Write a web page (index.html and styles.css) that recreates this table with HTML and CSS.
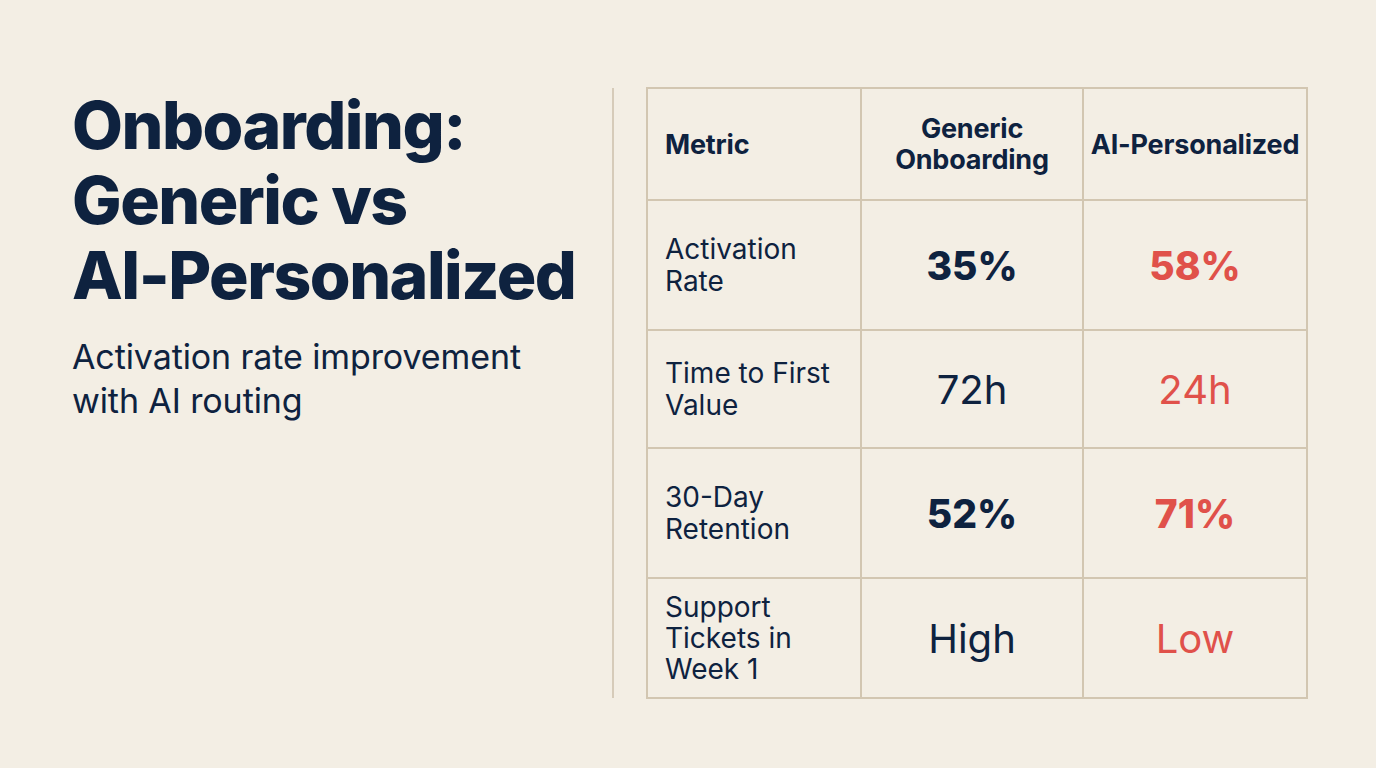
FILE: index.html
```html
<!DOCTYPE html>
<html lang="en">
<head>
<meta charset="utf-8">
<title>Onboarding: Generic vs AI-Personalized</title>
<link rel="stylesheet" href="styles.css">
</head>
<body>
<main class="slide">
  <section class="intro">
    <h1 class="title">Onboarding:<br>Generic vs<br>AI-Personalized</h1>
    <p class="subtitle">Activation rate improvement<br>with AI routing</p>
  </section>
  <div class="divider"></div>
  <table class="compare">
    <colgroup>
      <col class="c1"><col class="c2"><col class="c3">
    </colgroup>
    <thead>
      <tr class="r-head">
        <th class="metric-head">Metric</th>
        <th>Generic<br>Onboarding</th>
        <th>AI-Personalized</th>
      </tr>
    </thead>
    <tbody>
      <tr class="r1">
        <td class="metric">Activation<br>Rate</td>
        <td class="val strong">35%</td>
        <td class="val strong ai">58%</td>
      </tr>
      <tr class="r2">
        <td class="metric">Time to First<br>Value</td>
        <td class="val">72h</td>
        <td class="val ai">24h</td>
      </tr>
      <tr class="r3">
        <td class="metric">30-Day<br>Retention</td>
        <td class="val strong">52%</td>
        <td class="val strong ai">71%</td>
      </tr>
      <tr class="r4">
        <td class="metric tight">Support<br>Tickets in<br>Week 1</td>
        <td class="val">High</td>
        <td class="val ai">Low</td>
      </tr>
    </tbody>
  </table>
</main>
</body>
</html>
```

FILE: styles.css
```css
* { box-sizing: border-box; }
html, body {
  margin: 0;
  padding: 0;
  background: #f3eee4;
}
body {
  width: 1376px;
  height: 768px;
  overflow: hidden;
  font-family: Inter, "Noto Sans", "Liberation Sans", sans-serif;
  color: #0e223f;
}
.slide {
  display: flex;
  align-items: flex-start;
  padding: 87px 0 0 72px;
}
.intro {
  width: 540px;
  padding-top: 1px;
}
.title {
  margin: 0;
  font-size: 66px;
  line-height: 75px;
  font-weight: 800;
  letter-spacing: -1.5px;
  color: #0e223f;
}
.subtitle {
  margin: 22px 0 0;
  font-size: 34px;
  line-height: 44px;
  font-weight: 400;
  letter-spacing: -0.1px;
  color: #0e223f;
}
.divider {
  width: 2px;
  height: 610px;
  background: #d6cbb9;
  margin-top: 1px;
}
.compare {
  margin-left: 32px;
  width: 662px;
  border-collapse: collapse;
  border: 2px solid #d2c6b1;
}
.c1 { width: 214px; }
.c2 { width: 222px; }
.c3 { width: 224px; }
.compare th, .compare td {
  border: 2px solid #d2c6b1;
  padding: 0;
  vertical-align: middle;
}
.compare th {
  font-size: 27px;
  line-height: 31px;
  font-weight: 700;
  text-align: center;
  letter-spacing: -0.2px;
}
.compare th.metric-head {
  text-align: left;
  padding-left: 17px;
}
.r-head { height: 112px; }
.r1 { height: 130px; }
.r2 { height: 118px; }
.r3 { height: 130px; }
.r4 { height: 120px; }
.metric {
  font-size: 28px;
  line-height: 32px;
  padding-left: 17px !important;
  text-align: left;
}
.metric.tight { line-height: 31px; }
.val {
  font-size: 40px;
  text-align: center;
  font-weight: 400;
}
.val.strong { font-size: 39px; font-weight: 800; }
.val.ai { color: #e0514a; }
```
